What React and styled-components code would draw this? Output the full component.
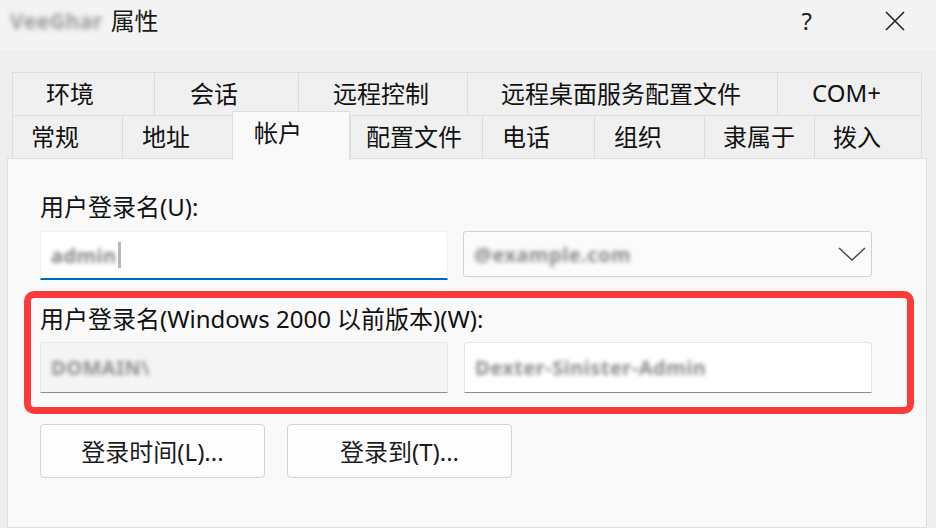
import React from "react";
import styled, { createGlobalStyle } from "styled-components";

const Global = createGlobalStyle`
  html, body { margin: 0; padding: 0; background: #efefef; }
  body { font-family: "Noto Sans", "Noto Sans CJK SC", sans-serif; color: #1b1b1b; }
`;

const Window = styled.div`
  width: 936px;
  height: 528px;
  overflow: hidden;
  background: #efefef;
  display: flex;
  flex-direction: column;
  font-family: "Noto Sans", "Noto Sans CJK SC", sans-serif;
  font-size: 24px;
`;

const TitleBar = styled.div`
  box-sizing: border-box;
  height: 52px;
  flex: none;
  display: flex;
  align-items: center;
  padding: 0 0 10px 10px;
  background: #f3f3f3;
  border-bottom: 1px solid #ebebeb;
`;

const Blurred = styled.span`
  display: inline-block;
  filter: blur(${(p) => p.$blur || 2.2}px);
  color: ${(p) => p.$color || "#777"};
  font-size: ${(p) => p.$size || 20}px;
  font-weight: 700;
  letter-spacing: 0.5px;
  white-space: nowrap;
`;

const Title = styled.span`
  margin-left: 8px;
  font-size: 24px;
  line-height: 32px;
  color: #1a1a1a;
`;

const TitleButtons = styled.div`
  margin-left: auto;
  display: flex;
  align-items: center;
  gap: 72px;
  padding-right: 30px;
`;

const Help = styled.span`
  font-size: 24px;
  color: #222;
  line-height: 32px;
`;

const TabStrip = styled.div`
  flex: none;
  padding: 20px 0 0 12px;
  display: flex;
  flex-direction: column;
`;

const TabRow = styled.div`
  display: flex;
  height: ${(p) => p.$h}px;
  align-items: flex-end;
`;

const Tab = styled.div`
  box-sizing: border-box;
  width: ${(p) => p.$w}px;
  height: ${(p) => (p.$active ? p.$h + 5 : p.$h)}px;
  padding-left: ${(p) => p.$pad}px;
  padding-bottom: ${(p) => (p.$active ? 9 : 4)}px;
  display: flex;
  align-items: center;
  border-top: 1px solid #dddddd;
  border-left: 1px solid #dddddd;
  &:last-child { border-right: 1px solid #dddddd; }
  ${(p) => p.$active && `border-right: 1px solid #dddddd;`}
  background: ${(p) => (p.$active ? "#f9f9f9" : "#f0f0f0")};
  position: ${(p) => (p.$active ? "relative" : "static")};
  z-index: ${(p) => (p.$active ? 2 : 0)};
  margin-bottom: ${(p) => (p.$active ? -1 : 0)}px;
  font-size: 24px;
  color: #111;
  white-space: nowrap;
`;

const Panel = styled.div`
  position: relative;
  z-index: 1;
  margin-left: 7px;
  width: 920px;
  flex: 1;
  box-sizing: border-box;
  margin-top: -1px;
  background: #f9f9f9;
  border: 1px solid #e0e0e0;
  padding: 32px 0 0 32px;
  display: flex;
  flex-direction: column;
`;

const Label = styled.div`
  font-size: 24px;
  line-height: 32px;
  color: #111;
  white-space: nowrap;
`;

const FieldRow = styled.div`
  display: grid;
  grid-template-columns: 408px 408px;
  column-gap: 16px;
  align-items: start;
  margin-top: ${(p) => p.$mt}px;
`;

const TextBox = styled.div`
  box-sizing: border-box;
  height: ${(p) => p.$h}px;
  display: flex;
  align-items: center;
  padding-left: 10px;
  background: ${(p) => (p.$disabled ? "#f4f4f4" : "#ffffff")};
  border: 1px solid ${(p) => (p.$disabled ? "#e8e8e8" : "#e6e6e6")};
  border-bottom: ${(p) => (p.$focused ? "2px solid #0067c0" : "1px solid #8d8d8d")};
  border-radius: 3px 3px 0 0;
  ${(p) => p.$focused && `border-color: #f2f2f2; border-bottom-color: #0067c0;`}
`;

const Caret = styled.span`
  display: inline-block;
  width: 3px;
  height: 26px;
  margin-left: 1px;
  background: #b4b8b8;
  filter: blur(0.6px);
`;

const Combo = styled.div`
  box-sizing: border-box;
  height: 46px;
  margin-left: -1px;
  display: flex;
  align-items: center;
  padding: 0 2px 0 10px;
  background: #fbfbfb;
  border: 1px solid #d2d2d2;
  border-radius: 3px;
`;

const ChevronWrap = styled.span`
  margin-left: auto;
  display: flex;
  align-items: center;
`;

const Section = styled.div`
  position: relative;
  margin-top: 23px;
  width: 832px;
  &::before {
    content: "";
    position: absolute;
    top: -12px;
    left: -16px;
    right: -42px;
    bottom: -21px;
    border: 7px solid #fc3a3a;
    border-radius: 10px;
    pointer-events: none;
  }
`;

const ButtonRow = styled.div`
  display: flex;
  gap: 22px;
  margin-top: 31px;
`;

const Button = styled.button`
  box-sizing: border-box;
  width: 225px;
  height: 54px;
  background: #fdfdfd;
  border: 1px solid #d3d3d3;
  border-radius: 4px;
  font-family: "Noto Sans", "Noto Sans CJK SC", sans-serif;
  font-size: 24px;
  color: #1b1b1b;
  padding: 0 0 2px;
`;

const row1 = [
  { t: "环境", w: 142, pad: 33 },
  { t: "会话", w: 144, pad: 35 },
  { t: "远程控制", w: 169, pad: 34 },
  { t: "远程桌面服务配置文件", w: 310, pad: 33 },
  { t: "COM+", w: 145, pad: 34 },
];

const row2 = [
  { t: "常规", w: 110, pad: 18 },
  { t: "地址", w: 110, pad: 19 },
  { t: "帐户", w: 118, pad: 21, active: true },
  { t: "配置文件", w: 132, pad: 15 },
  { t: "电话", w: 112, pad: 19 },
  { t: "组织", w: 110, pad: 19 },
  { t: "隶属于", w: 110, pad: 18 },
  { t: "拨入", w: 108, pad: 18 },
];

export default function App() {
  return (
    <>
      <Global />
      <Window>
        <TitleBar>
          <Blurred $blur={2.6} $color="#9a9a9a" $size={21}>VeeGhar</Blurred>
          <Title>属性</Title>
          <TitleButtons>
            <Help>?</Help>
            <svg width="22" height="22" viewBox="0 0 22 22">
              <path d="M2 2 L20 20 M20 2 L2 20" stroke="#222" strokeWidth="1.6" fill="none" />
            </svg>
          </TitleButtons>
        </TitleBar>

        <TabStrip>
          <TabRow $h={43}>
            {row1.map((t) => (
              <Tab key={t.t} $w={t.w} $pad={t.pad} $h={43}>{t.t}</Tab>
            ))}
          </TabRow>
          <TabRow $h={44}>
            {row2.map((t) => (
              <Tab key={t.t} $w={t.w} $pad={t.pad} $h={44} $active={t.active}>{t.t}</Tab>
            ))}
          </TabRow>
        </TabStrip>

        <Panel>
          <Label>用户登录名(U):</Label>
          <FieldRow $mt={8}>
            <TextBox $h={49} $focused>
              <Blurred $color="#858585">admin</Blurred>
              <Caret />
            </TextBox>
            <Combo>
              <Blurred $color="#8a8a8a">@example.com</Blurred>
              <ChevronWrap>
                <svg width="34" height="20" viewBox="0 0 34 20">
                  <path d="M4 4 L17 16 L30 4" stroke="#444" strokeWidth="1.4" fill="none" />
                </svg>
              </ChevronWrap>
            </Combo>
          </FieldRow>

          <Section>
            <Label>用户登录名(Windows 2000 以前版本)(W):</Label>
            <FieldRow $mt={7}>
              <TextBox $h={51} $disabled>
                <Blurred $color="#8e8e8e">DOMAIN\</Blurred>
              </TextBox>
              <TextBox $h={51}>
                <Blurred $color="#8a8a8a">Dexter-Sinister-Admin</Blurred>
              </TextBox>
            </FieldRow>
          </Section>

          <ButtonRow>
            <Button>登录时间(L)...</Button>
            <Button>登录到(T)...</Button>
          </ButtonRow>
        </Panel>
      </Window>
    </>
  );
}
